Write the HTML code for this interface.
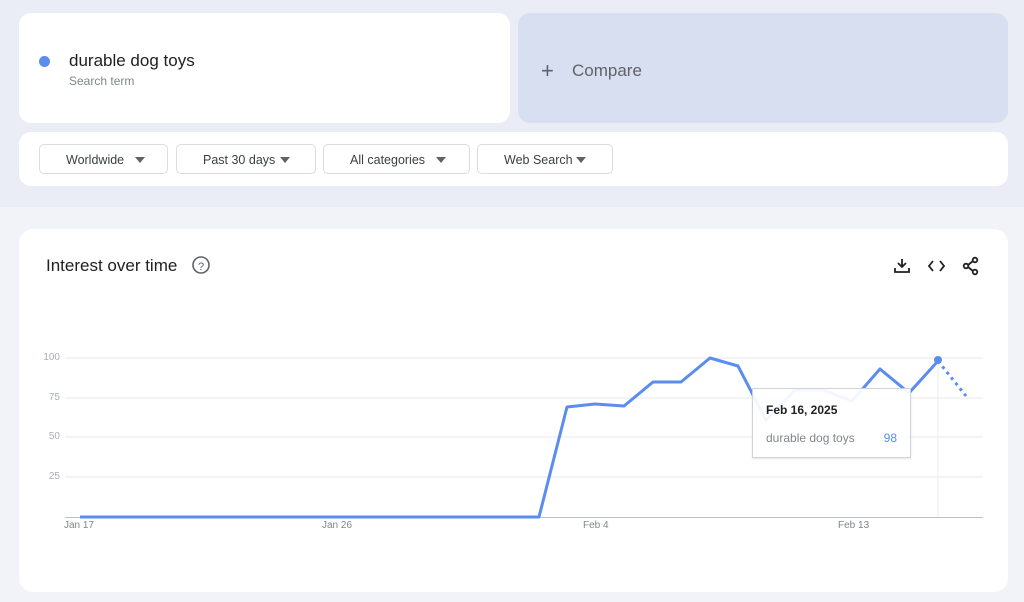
<!DOCTYPE html>
<html><head><meta charset="utf-8"><style>
*{box-sizing:border-box;margin:0;padding:0}
body{width:1024px;height:602px;overflow:hidden;background:#f1f3f9;font-family:"Liberation Sans",sans-serif;position:relative}
.top{position:absolute;left:0;top:0;width:1024px;height:207px;background:#eaedf6}
.card{position:absolute;background:#fff;border-radius:14px}
.chip{position:absolute;top:144px;height:30px;border:1px solid #dadce0;border-radius:5px;background:#fff;font-size:12.5px;color:#3c4043;line-height:30px;padding-left:26px}
.chip i{position:absolute;top:12px;right:22px;width:0;height:0;border-left:5px solid transparent;border-right:5px solid transparent;border-top:6px solid #5f6368}
.yl{position:absolute;font-size:10px;color:#a8adb8;width:20px;text-align:right;left:40px}
.xl{position:absolute;top:520px;font-size:10px;color:#80868b}
</style></head><body>
<div class="top"></div>
<div class="card" style="left:19px;top:13px;width:491px;height:110px;border-radius:12px"></div>
<div style="position:absolute;left:39px;top:56px;width:11px;height:11px;border-radius:50%;background:#5b8def"></div>
<div style="position:absolute;left:69px;top:51px;font-size:17px;color:#202124">durable dog toys</div>
<div style="position:absolute;left:69px;top:74px;font-size:12px;color:#80868b">Search term</div>
<div style="position:absolute;left:518px;top:13px;width:490px;height:110px;border-radius:12px;background:#d7dff0"></div>
<div style="position:absolute;left:541px;top:58px;font-size:22px;color:#5f6368;font-weight:300">+</div>
<div style="position:absolute;left:572px;top:61px;font-size:17px;color:#5f6368">Compare</div>
<div class="card" style="left:19px;top:132px;width:989px;height:54px;border-radius:12px"></div>
<div class="chip" style="left:39px;width:129px">Worldwide<i></i></div>
<div class="chip" style="left:176px;width:140px">Past 30 days<i style="right:25px"></i></div>
<div class="chip" style="left:323px;width:147px">All categories<i style="right:23px"></i></div>
<div class="chip" style="left:477px;width:136px">Web Search<i style="right:26px"></i></div>
<div class="card" style="left:19px;top:229px;width:989px;height:363px"></div>
<div style="position:absolute;left:46px;top:256px;font-size:17px;color:#202124">Interest over time</div>
<svg style="position:absolute;left:0;top:0" width="1024" height="602">
<circle cx="201" cy="265" r="8" fill="none" stroke="#5f6368" stroke-width="1.6"/>
<text x="201" y="270" font-size="11" text-anchor="middle" fill="#5f6368" font-family="Liberation Sans">?</text>
<g stroke="#202124" stroke-width="1.8" fill="none">
<path d="M902 259v8M898 263l4 4 4-4M895 268v4h14v-4"/>
<path d="M933 261l-4 5 4 5M940 261l4 5-4 5"/>
<circle cx="975" cy="260" r="2.3"/><circle cx="966" cy="266" r="2.3"/><circle cx="975" cy="272" r="2.3"/>
<path d="M968 265l5-4M968 267l5 4"/>
</g>
<g stroke="#e8eaed" stroke-width="1">
<path d="M65 358H983M65 398H983M65 437H983M65 477H983"/>
<path d="M938 358V517" stroke="#eeeeee"/>
</g>
<path d="M65 517.5H983" stroke="#bdc1c6" stroke-width="1"/>
<polyline fill="none" stroke="#5b8def" stroke-width="3" stroke-linejoin="round" points="80,517 539,517 567,407 595,404 624,406 653,382 681,382 710,358 738,366 766,420 795,390 823,390 852,401 880,369 909,393 938,361"/>
<path d="M938 361L966 396" stroke="#5b8def" stroke-width="3" stroke-dasharray="3,4"/>
<circle cx="938" cy="360" r="4" fill="#5b8def"/>
</svg>
<div class="yl" style="top:352px">100</div>
<div class="yl" style="top:392px">75</div>
<div class="yl" style="top:431px">50</div>
<div class="yl" style="top:471px">25</div>
<div class="xl" style="left:64px">Jan 17</div>
<div class="xl" style="left:322px">Jan 26</div>
<div class="xl" style="left:583px">Feb 4</div>
<div class="xl" style="left:838px">Feb 13</div>
<div style="position:absolute;left:752px;top:388px;width:159px;height:70px;background:rgba(255,255,255,0.92);border:1px solid #d0d3d8;box-shadow:0 1px 2px rgba(0,0,0,.1)">
<div style="position:absolute;left:13px;top:14px;font-size:12px;font-weight:bold;color:#202124">Feb 16, 2025</div>
<div style="position:absolute;left:13px;top:42px;font-size:12px;color:#80868b">durable dog toys</div>
<div style="position:absolute;right:13px;top:42px;font-size:12px;color:#5b8def">98</div>
</div>
</body></html>
